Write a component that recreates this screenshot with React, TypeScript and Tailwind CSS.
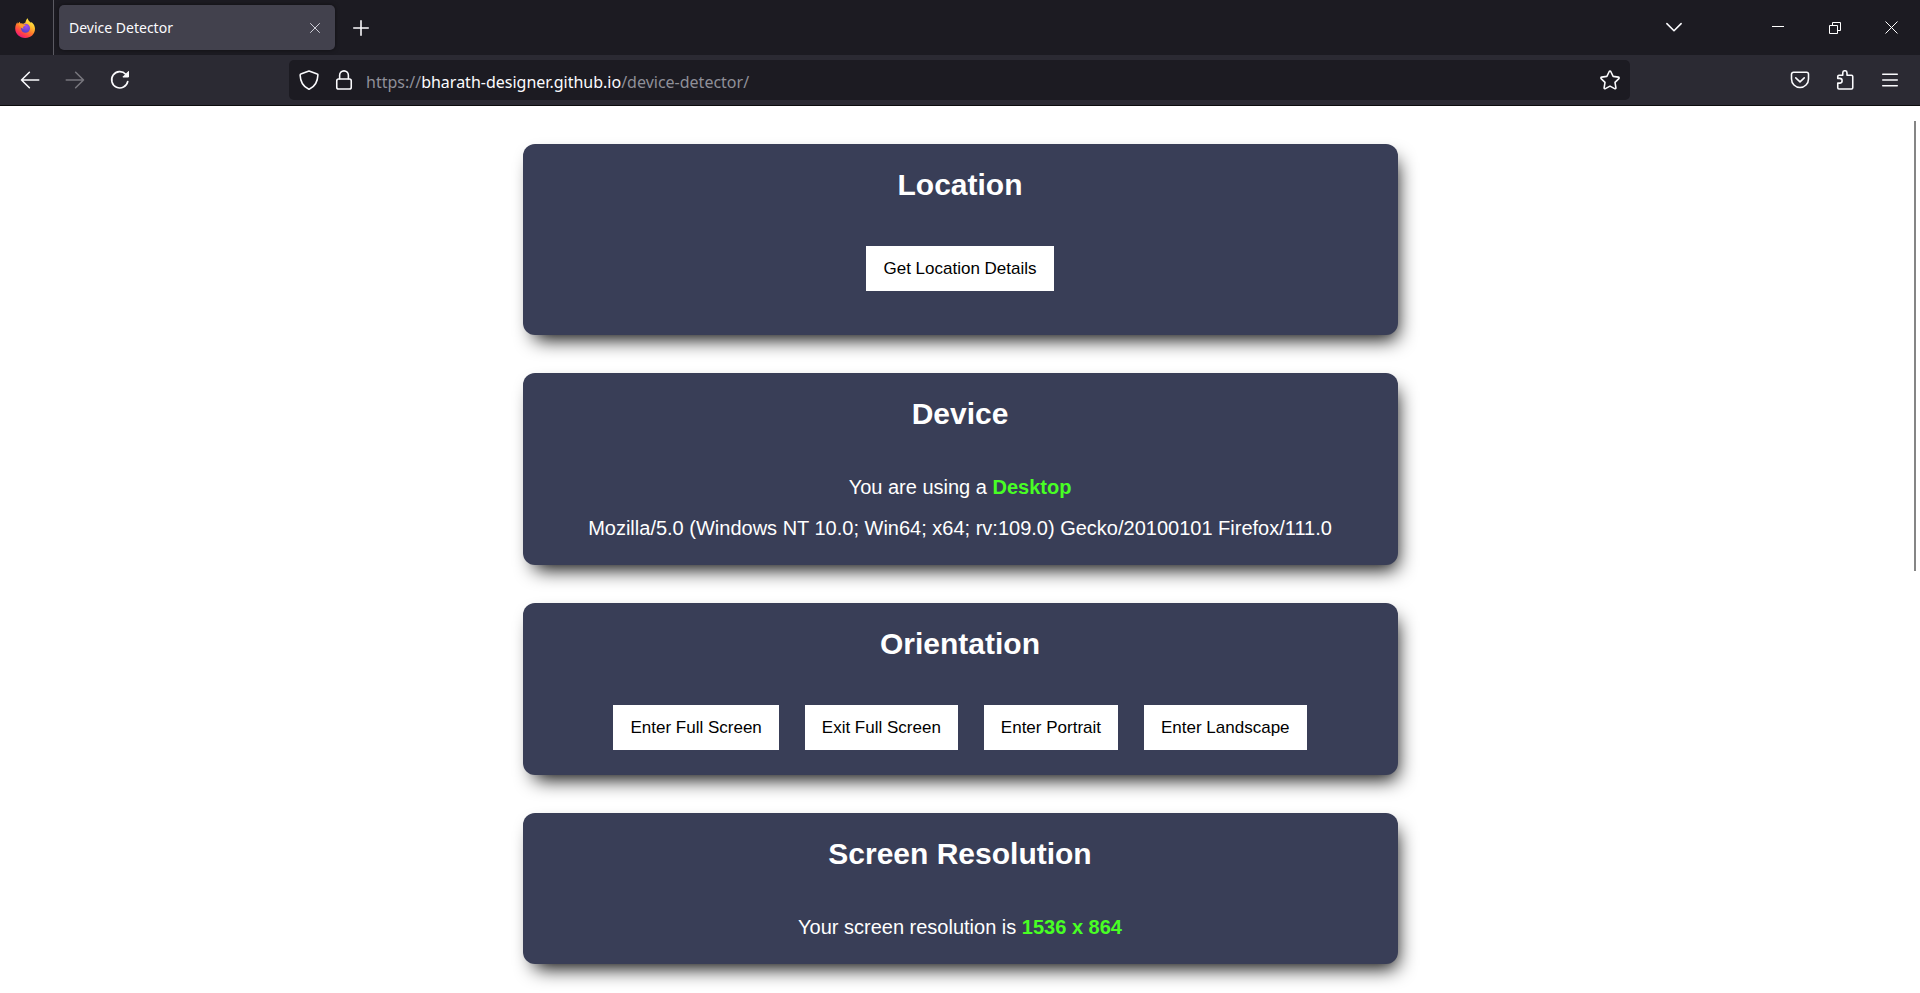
import type { ReactNode } from "react";

const heading = "text-center text-[30px] leading-[34px] font-bold text-white";
const line = "text-center text-[20px] leading-6 text-white";

function Card({ title, children, roomy = false }: { title: string; children: ReactNode; roomy?: boolean }) {
  return (
    <section
      className={`w-full max-w-[875px] rounded-xl bg-[#393e57] px-6 pt-6 shadow-[5px_10px_19px_-6px_#000] ${
        roomy ? "pb-11" : "pb-[25px]"
      }`}
    >
      <h2 className={heading}>{title}</h2>
      <div className="pt-11">{children}</div>
    </section>
  );
}

function ActionButton({ children }: { children: ReactNode }) {
  return (
    <button type="button" className="h-[45px] bg-white px-[17px] text-[17px] leading-5 text-black">
      {children}
    </button>
  );
}

function BarButton({ label, children, dim = false }: { label: string; children: ReactNode; dim?: boolean }) {
  return (
    <button
      type="button"
      aria-label={label}
      className={`flex h-10 w-[45px] shrink-0 items-center justify-center ${dim ? "text-[#77767d]" : "text-[#fbfbfe]"}`}
    >
      {children}
    </button>
  );
}

function Icon({ children, size = "size-5", width = 1.25 }: { children: ReactNode; size?: string; width?: number }) {
  return (
    <svg
      viewBox="0 0 16 16"
      className={`${size} shrink-0`}
      fill="none"
      stroke="currentColor"
      strokeWidth={width}
      strokeLinecap="round"
      strokeLinejoin="round"
      aria-hidden="true"
    >
      {children}
    </svg>
  );
}

function FirefoxLogo() {
  return (
    <svg viewBox="0 0 20 20" className="size-5" aria-hidden="true">
      <defs>
        <linearGradient id="flame" x1="0.85" y1="0.05" x2="0.25" y2="1">
          <stop offset="0" stopColor="#fff44f" />
          <stop offset="0.3" stopColor="#ffc02e" />
          <stop offset="0.55" stopColor="#ff7a2b" />
          <stop offset="0.8" stopColor="#ff3750" />
          <stop offset="1" stopColor="#e31587" />
        </linearGradient>
        <radialGradient id="globe" cx="0.6" cy="0.3" r="0.8">
          <stop offset="0" stopColor="#a04bf0" />
          <stop offset="1" stopColor="#4a3fc4" />
        </radialGradient>
      </defs>
      <path
        fill="url(#flame)"
        d="M12.6 0.3c.6 2.500 2 3.200 3.300 4.500.4-.1.500-.5.500-.9C18.700 5.600 20 8.200 20 10.700 20 16 15.600 20 10.200 20 4.500 20 .2 15.800.2 10.600c0-2.500.8-4.700 2.200-6.300l.4 1.500c.5-.8 1.300-1.700 2-2.100l.5 2c.9-.3 1.900-.2 2.700.1 1.300-.5 2-1 2.500-1.600.4-1.400 1-2.900 2.100-3.900z"
      />
      <circle cx="10.500" cy="10.200" r="4.500" fill="url(#globe)" />
      <path fill="#ff9a2a" d="M3.900 5.800c1.600-.6 3.100-.2 4.100.4l2.800.5c-.2 1-1.500 1.400-2.300 1.800-.7.500-.6 1.500.3 2.200-1.900.2-3.700-1.500-4.900-4.900z" />
    </svg>
  );
}

function TabStrip() {
  return (
    <div className="flex h-[55px] shrink-0 items-center bg-[#1c1b22]">
      <div className="flex h-full w-[54px] items-center border-r border-[#5b5a62] pl-[15px]">
        <FirefoxLogo />
      </div>
      <div className="ml-[5px] flex h-[45px] w-[276px] items-center justify-between rounded-[5px] bg-[#42414d] px-2.5 shadow-[0_0_4px_rgba(0,0,0,0.5)]">
        <span className="text-[14px] leading-5 text-[#fbfbfe]">Device Detector</span>
        <button type="button" aria-label="Close tab" className="flex size-5 items-center justify-center text-[#cfcfd8]">
          <Icon size="size-4" width={1}>
            <path d="m3.500 3.500 9 9M12.500 3.500l-9 9" />
          </Icon>
        </button>
      </div>
      <button type="button" aria-label="New tab" className="ml-1 flex h-10 w-11 items-center justify-center text-[#fbfbfe]">
        <Icon>
          <path d="M8 2.200v11.600M2.200 8h11.600" />
        </Icon>
      </button>
      <div className="flex-1" />
      <button type="button" aria-label="List all tabs" className="mr-[53px] flex h-10 w-[45px] items-center justify-center text-[#fbfbfe]">
        <Icon>
          <path d="m2.300 4.500 5.700 5.700 5.700-5.700" />
        </Icon>
      </button>
      <div className="flex h-full text-white">
        <button type="button" aria-label="Minimize" className="flex w-[57px] items-center justify-center">
          <svg viewBox="0 0 12 12" className="size-3" stroke="currentColor" fill="none" aria-hidden="true">
            <path d="M0 4.500h12" />
          </svg>
        </button>
        <button type="button" aria-label="Restore" className="flex w-[57px] items-center justify-center">
          <svg viewBox="0 0 12 12" className="size-3" stroke="currentColor" fill="none" aria-hidden="true">
            <path d="M.5 3.500h8v8h-8zM3.500 3.500v-3h8v8h-3" />
          </svg>
        </button>
        <button type="button" aria-label="Close window" className="flex w-[57px] items-center justify-center">
          <svg viewBox="0 0 13 13" className="size-[13px]" stroke="currentColor" fill="none" aria-hidden="true">
            <path d="m.5.5 12 12M12.500.5l-12 12" />
          </svg>
        </button>
      </div>
    </div>
  );
}

function NavBar() {
  return (
    <div className="flex h-[51px] shrink-0 items-center border-b border-[#0c0c0d] bg-[#2b2a33] pr-2 pl-[7px]">
      <BarButton label="Back">
        <Icon>
          <path d="M15 8H1.200M7.500 1.800 1.200 8l6.300 6.200" />
        </Icon>
      </BarButton>
      <BarButton label="Forward" dim>
        <Icon>
          <path d="M1 8h13.800M8.500 1.800 14.800 8l-6.300 6.200" />
        </Icon>
      </BarButton>
      <BarButton label="Reload">
        <Icon width={1.3}>
          <path d="M14.200 9.200A6.500 6.500 0 1 1 12.600 3.400" />
          <path d="M14.800 1.400v4.200h-4.200z" fill="currentColor" strokeWidth="0.8" />
        </Icon>
      </BarButton>
      <div className="flex flex-1 justify-center px-[147px]">
        <div className="flex h-10 w-full items-center rounded-[5px] bg-[#1c1b22] px-2.5 text-[#fbfbfe]">
          <button type="button" aria-label="Tracking protection" className="flex">
            <Icon>
              <path d="M8 .8 14.600 3.200c.4.100.6.500.5.900-.2 5.300-2.300 9.100-6.700 11.100a1 1 0 0 1-.8 0C3.200 13.200 1.100 9.400.9 4.100c0-.4.200-.8.500-.9z" />
            </Icon>
          </button>
          <button type="button" aria-label="Site information" className="ml-[15px] flex">
            <Icon>
              <rect x="2.200" y="7.200" width="11.600" height="8" rx="1.500" />
              <path d="M4.500 7V4.200a3.500 3.500 0 0 1 7 0V7" />
            </Icon>
          </button>
          <a
            href="https://bharath-designer.github.io/device-detector/"
            className="ml-3 flex-1 pt-1 text-[16px] leading-6 whitespace-nowrap text-[#8f8f98]"
          >
            https://<span className="text-[#fbfbfe]">bharath-designer.github.io</span>/device-detector/
          </a>
          <button type="button" aria-label="Bookmark this page" className="flex">
            <Icon>
              <path d="M7.400 1.200a.7.7 0 0 1 1.200 0l1.900 3.900 4.200.6c.6.100.8.800.4 1.200l-3.100 3 .7 4.300c.1.600-.5 1-1 .7L8 12.900l-3.700 2c-.5.300-1.100-.1-1-.7l.7-4.300-3.100-3c-.4-.4-.2-1.100.4-1.200l4.200-.6z" />
            </Icon>
          </button>
        </div>
      </div>
      <BarButton label="Save to Pocket">
        <Icon>
          <path d="M2.800 1.800h10.400c.9 0 1.600.7 1.600 1.600v3.800a6.800 6.800 0 0 1-13.600 0V3.400c0-.9.700-1.600 1.600-1.600z" />
          <path d="m4.600 6.300 3.400 3.200 3.400-3.200" />
        </Icon>
      </BarButton>
      <BarButton label="Extensions">
        <Icon>
          <path d="M2.200 14.200v-3.700h1.600a1.900 1.900 0 0 0 0-3.800H2.200V5.200c0-.6.400-1 1-1h3V2.300a1.700 1.700 0 0 1 3.400 0v1.900h3.600c.6 0 1 .4 1 1v9c0 .6-.4 1-1 1h-10c-.6 0-1-.4-1-1z" />
        </Icon>
      </BarButton>
      <BarButton label="Open application menu">
        <Icon>
          <path d="M2.200 3.400h11.600M2.200 8h11.600M2.200 12.600h11.600" />
        </Icon>
      </BarButton>
    </div>
  );
}

export default function App() {
  return (
    <div className="flex h-screen flex-col overflow-hidden bg-white">
      <header className="font-['Noto_Sans',sans-serif]">
        <TabStrip />
        <NavBar />
      </header>
      <div className="relative min-h-0 flex-1 overflow-hidden font-['Liberation_Sans',Arial,sans-serif]">
        <main className="flex flex-col items-center gap-[38px] px-4 py-[38px]">
          <Card title="Location" roomy>
            <div className="flex justify-center">
              <ActionButton>Get Location Details</ActionButton>
            </div>
          </Card>
          <Card title="Device">
            <div className="flex flex-col gap-[17px]">
              <p className={line}>
                You are using a <strong className="text-[#48ff24]">Desktop</strong>
              </p>
              <p className={line}>Mozilla/5.0 (Windows NT 10.0; Win64; x64; rv:109.0) Gecko/20100101 Firefox/111.0</p>
            </div>
          </Card>
          <Card title="Orientation">
            <div className="flex flex-wrap justify-center gap-[26px]">
              <ActionButton>Enter Full Screen</ActionButton>
              <ActionButton>Exit Full Screen</ActionButton>
              <ActionButton>Enter Portrait</ActionButton>
              <ActionButton>Enter Landscape</ActionButton>
            </div>
          </Card>
          <Card title="Screen Resolution">
            <p className={line}>
              Your screen resolution is <strong className="text-[#48ff24]">1536 x 864</strong>
            </p>
          </Card>
        </main>
        <div className="absolute top-[15px] right-1 h-[450px] w-0.5 bg-[#858585]" />
      </div>
    </div>
  );
}
